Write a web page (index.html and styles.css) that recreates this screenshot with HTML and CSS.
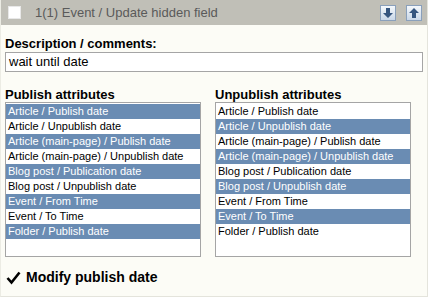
FILE: index.html
```html
<!DOCTYPE html>
<html lang="en">
<head>
    <meta charset="UTF-8">
    <title>Update hidden field</title>
    <link rel="stylesheet" href="styles.css">
</head>
<body>
    <div class="event">
        <div class="event-header">
            <span class="box"></span>
            <span class="event-title">1(1) Event / Update hidden field</span>
            <span class="move-buttons">
                <span class="move-btn">
                    <svg width="14" height="14" viewBox="0 0 14 14"><path d="M5 2h4v5h3l-5 5-5-5h3z" fill="#35557f"/></svg>
                </span>
                <span class="move-btn">
                    <svg width="14" height="14" viewBox="0 0 14 14"><path d="M5 12h4V7h3L7 2 2 7h3z" fill="#35557f"/></svg>
                </span>
            </span>
        </div>

        <div class="event-body">
            <label class="label">Description / comments:</label>
            <div class="input">wait until date</div>

            <div class="columns">
                <div class="column">
                    <label class="label">Publish attributes</label>
                    <ul class="listbox">
                        <li class="selected">Article / Publish date</li>
                        <li>Article / Unpublish date</li>
                        <li class="selected">Article (main-page) / Publish date</li>
                        <li>Article (main-page) / Unpublish date</li>
                        <li class="selected">Blog post / Publication date</li>
                        <li>Blog post / Unpublish date</li>
                        <li class="selected">Event / From Time</li>
                        <li>Event / To Time</li>
                        <li class="selected">Folder / Publish date</li>
                    </ul>
                </div>
                <div class="column">
                    <label class="label">Unpublish attributes</label>
                    <ul class="listbox">
                        <li>Article / Publish date</li>
                        <li class="selected">Article / Unpublish date</li>
                        <li>Article (main-page) / Publish date</li>
                        <li class="selected">Article (main-page) / Unpublish date</li>
                        <li>Blog post / Publication date</li>
                        <li class="selected">Blog post / Unpublish date</li>
                        <li>Event / From Time</li>
                        <li class="selected">Event / To Time</li>
                        <li>Folder / Publish date</li>
                    </ul>
                </div>
            </div>

            <div class="check-row">
                <svg class="check" width="15" height="15" viewBox="0 0 15 15"><path d="M1.5 8l4 4.5L13.5 2.5" fill="none" stroke="#000" stroke-width="2.6"/></svg>
                <span class="label big">Modify publish date</span>
            </div>
        </div>
    </div>
</body>
</html>
```

FILE: styles.css
```css
body {
    margin: 0;
    font-family: "Liberation Sans", Arial, sans-serif;
    font-size: 12px;
    background: #ffffff;
}

.event {
    width: 428px;
    height: 297px;
    border-right: 1px solid #e4e4dc;
    border-bottom: 1px solid #e4e4dc;
    border-left: 1px solid #ecece4;
    background: #fcfcf6;
    box-sizing: border-box;
}

.event-header {
    height: 25px;
    background: #c0bfb7;
    display: flex;
    align-items: center;
    padding: 0 5px 0 7px;
}

.box {
    width: 11px;
    height: 11px;
    background: #ffffff;
    border: 1px solid #e8e8e8;
    margin-right: 14px;
}

.event-title {
    color: #5a5a5a;
    font-size: 13px;
    flex: 1;
}

.move-buttons {
    display: flex;
    gap: 10px;
}

.move-btn {
    width: 14px;
    height: 14px;
    border: 1px solid #8aa0bb;
    background: linear-gradient(#f4f8fc, #c9d7e8);
    display: flex;
}

.event-body {
    padding: 11px 4px 0 4px;
}

.label {
    display: block;
    font-weight: bold;
    font-size: 13px;
    color: #000;
    line-height: 15px;
}

.label.big {
    font-size: 14px;
}

.input {
    margin-top: 1px;
    height: 18px;
    border: 1px solid #a5a5a5;
    background: #ffffff;
    padding: 0 3px;
    line-height: 18px;
    font-size: 13px;
}

.columns {
    display: flex;
    gap: 14px;
    margin-top: 15px;
}

.column {
    width: 196px;
}

.listbox {
    list-style: none;
    margin: 0;
    padding: 1px 0;
    height: 151px;
    border: 1px solid #a5a5a5;
    background: #ffffff;
    font-size: 11px;
}

.listbox li {
    height: 15px;
    line-height: 15px;
    padding: 0 2px;
    white-space: nowrap;
    overflow: hidden;
}

.listbox li.selected {
    background: #6a8cb3;
    color: #ffffff;
}

.check-row {
    display: flex;
    align-items: center;
    gap: 5px;
    margin-top: 13px;
    padding-left: 1px;
}
```
